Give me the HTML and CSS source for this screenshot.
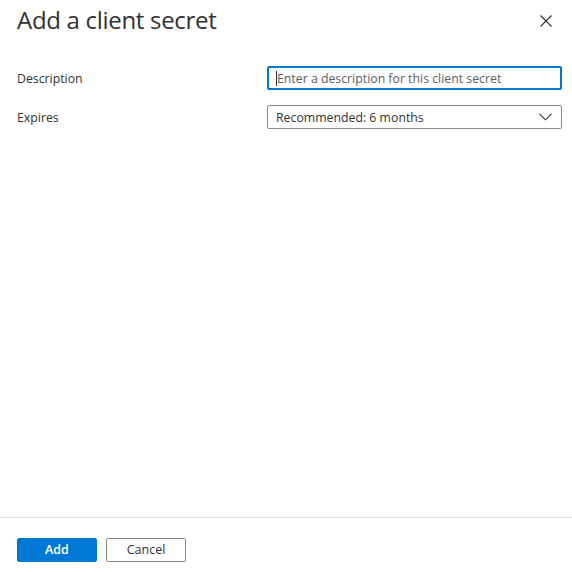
FILE: index.html
```html
<!DOCTYPE html>
<html>
<head>
<meta charset="utf-8">
<link rel="stylesheet" href="styles.css">
</head>
<body>
<div class="panel">
  <header class="header">
    <h1 class="title">Add a client secret</h1>
    <button class="close" aria-label="Close">
      <svg width="12" height="12" viewBox="0 0 12 12"><path d="M0.5 0.5 L11.5 11.5 M11.5 0.5 L0.5 11.5" stroke="#323130" stroke-width="1.1" fill="none"/></svg>
    </button>
  </header>
  <main class="form">
    <div class="row">
      <label class="label">Description</label>
      <div class="input focused"><span class="caret"></span><span class="placeholder">Enter a description for this client secret</span></div>
    </div>
    <div class="row">
      <label class="label">Expires</label>
      <div class="input select"><span class="value">Recommended: 6 months</span>
        <svg class="chev" width="13" height="8" viewBox="0 0 13 8"><path d="M0.5 0.8 L6.5 6.8 L12.5 0.8" stroke="#323130" stroke-width="1.1" fill="none"/></svg>
      </div>
    </div>
  </main>
  <footer class="footer">
    <button class="btn primary">Add</button>
    <button class="btn secondary">Cancel</button>
  </footer>
</div>
</body>
</html>
```
FILE: styles.css
```css
html, body { margin: 0; padding: 0; background: #fff; }
body { font-family: "Open Sans", "Noto Sans", sans-serif; color: #323130; }
.panel { height: 572px; display: flex; flex-direction: column; }
.header { display: flex; justify-content: space-between; align-items: flex-start; padding: 4px 20px 0 17px; height: 50px; box-sizing: border-box; }
.title { margin: 0; font-size: 24px; font-weight: 500; line-height: 32px; color: #323130; letter-spacing: -0.3px; }
.close { background: none; border: 0; padding: 0; margin-top: 11px; width: 12px; height: 12px; display: flex; }
.form { flex: 1; padding: 16px 10px 0 17px; display: flex; flex-direction: column; gap: 15px; }
.row { display: grid; grid-template-columns: 250px 295px; align-items: center; }
.label { font-size: 12.3px; color: #323130; }
.input { height: 24px; box-sizing: border-box; border: 1px solid #8a8886; border-radius: 2px; display: flex; align-items: center; padding: 0 8px; font-size: 12.3px; }
.input.focused { border: 2px solid #0078d4; padding: 0 7px; }
.caret { width: 1px; height: 15px; background: #323130; margin-right: 0; }
.placeholder { color: #605e5c; }
.select { justify-content: space-between; padding-right: 9px; }
.value { color: #323130; }
.footer { border-top: 1px solid #e1dfdd; height: 55px; box-sizing: border-box; padding: 20px 17px 0; display: flex; gap: 9px; align-items: flex-start; }
.btn { width: 80px; height: 24px; border-radius: 2px; font-family: "Open Sans", "Noto Sans", sans-serif; font-size: 12.5px; padding: 0; box-sizing: border-box; line-height: 20px; }
.primary { background: #0078d4; border: 1px solid #0078d4; color: #fff; font-weight: 600; }
.secondary { background: #fff; border: 1px solid #8a8886; color: #323130; }
```
